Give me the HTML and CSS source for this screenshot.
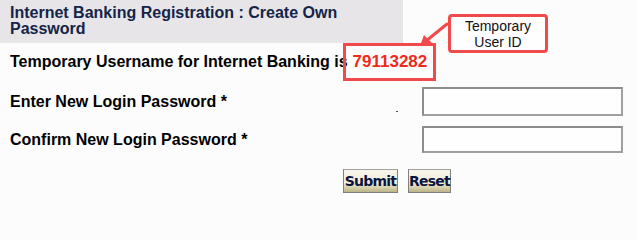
FILE: index.html
```html
<!DOCTYPE html>
<html>
<head>
<meta charset="utf-8">
<link rel="stylesheet" href="styles.css">
</head>
<body>
<div class="page">
  <div class="header">Internet Banking Registration : Create Own Password</div>
  <div class="username-row">
    <span class="username-label">Temporary Username for Internet Banking is</span>
    <span class="userid">79113282</span>
  </div>
  <div class="form">
    <label class="label">Enter New Login Password *</label>
    <span class="dot"></span>
    <input class="field tall" type="password">
    <label class="label">Confirm New Login Password *</label>
    <span></span>
    <input class="field" type="password">
  </div>
  <div class="actions">
    <button class="btn submit">Submit</button>
    <button class="btn reset">Reset</button>
  </div>
  <div class="callout">Temporary<br>User ID</div>
  <svg class="arrow" width="40" height="32" viewBox="0 0 40 32">
    <line x1="30" y1="3" x2="9" y2="20" stroke="#f04a4a" stroke-width="3" stroke-linecap="round"/>
    <polygon points="3,25 7,14 15,22" fill="#f04a4a"/>
  </svg>
</div>
</body>
</html>
```
FILE: styles.css
```css
html, body {
  margin: 0;
  padding: 0;
  background: #fdfcfd;
}
.page {
  position: relative;
  width: 638px;
  height: 203px;
  font-family: "Liberation Sans", Arial, sans-serif;
}
.header {
  box-sizing: border-box;
  width: 403px;
  height: 43px;
  background: #e8e5e8;
  color: #142448;
  font-weight: bold;
  font-size: 16px;
  line-height: 16px;
  padding: 5px 10px 0 10px;
}
.username-row {
  display: flex;
  align-items: center;
  height: 38px;
  padding-left: 10px;
}
.username-label {
  font-weight: bold;
  font-size: 16px;
  color: #000;
}
.userid {
  box-sizing: border-box;
  height: 38px;
  display: inline-flex;
  align-items: center;
  margin-left: -5px;
  padding: 0 6px 0 7px;
  border: 3px solid #f04a4a;
  color: #f02a1a;
  font-weight: bold;
  font-size: 17px;
}
.form {
  display: grid;
  grid-template-columns: 386px 26px 201px;
  row-gap: 10px;
  padding-left: 10px;
  padding-top: 6px;
  align-items: center;
}
.label {
  font-weight: bold;
  font-size: 16px;
  color: #000;
}
.dot {
  width: 2px;
  height: 1px;
  background: #555;
  justify-self: start;
  align-self: end;
  margin-bottom: 4px;
}
.field {
  box-sizing: border-box;
  width: 201px;
  height: 27px;
  margin: 0;
  border: 2px solid #8c8c8c;
  border-right-color: #a0a0a0;
  border-bottom-color: #a0a0a0;
  background: #fefefe;
}
.field.tall {
  height: 29px;
}
.actions {
  display: flex;
  gap: 10px;
  padding-left: 343px;
  padding-top: 16px;
}
.btn {
  box-sizing: border-box;
  height: 24px;
  margin: 0;
  padding: 0;
  border: 1px solid #808080;
  border-top-color: #a0a0a0;
  background: linear-gradient(#f8f6ec 0%, #efecd8 60%, #cfcaa0 85%, #b8b388 100%);
  color: #0a1440;
  font-family: "DejaVu Sans", Verdana, sans-serif;
  font-weight: bold;
  font-size: 14px;
  letter-spacing: -0.8px;
  text-align: center;
}
.submit {
  width: 55px;
}
.reset {
  width: 43px;
}
.callout {
  position: absolute;
  left: 448px;
  top: 14px;
  width: 100px;
  height: 39px;
  box-sizing: border-box;
  border: 3px solid #f04a4a;
  border-radius: 4px;
  background: #fefefe;
  text-align: center;
  font-size: 14px;
  line-height: 16px;
  color: #111;
  padding-top: 1px;
}
.arrow {
  position: absolute;
  left: 417px;
  top: 21px;
}
```
